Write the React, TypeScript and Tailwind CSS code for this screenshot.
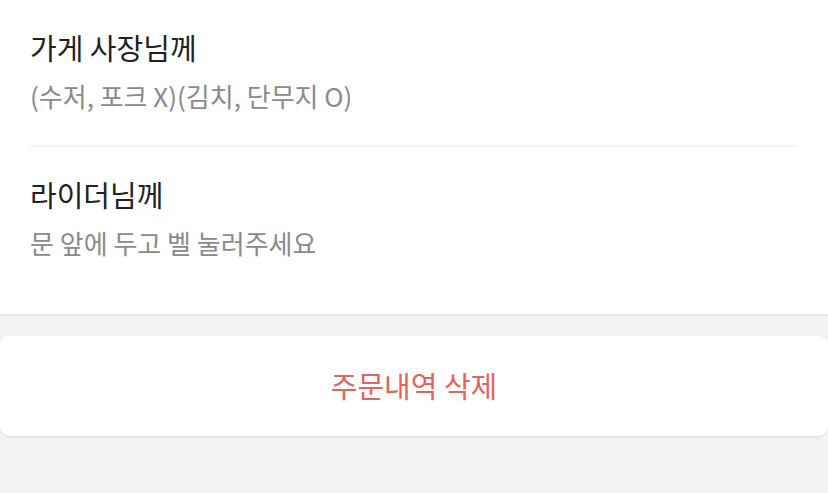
import React from 'react';

const font = { fontFamily: '"Noto Sans CJK KR", "Noto Sans", sans-serif' };

interface RequestItem {
  title: string;
  message: string;
}

const requests: RequestItem[] = [
  { title: '가게 사장님께', message: '(수저, 포크 X)(김치, 단무지 O)' },
  { title: '라이더님께', message: '문 앞에 두고 벨 눌러주세요' },
];

const App: React.FC = () => {
  return (
    <div className="min-h-screen w-[828px] h-[493px] bg-[#f2f3f5] overflow-hidden" style={font}>
      <div className="bg-white px-[30px] border-b-2 border-[#e6e7e9]">
        {requests.map((item, i) => (
          <div
            key={item.title}
            className={i === 0 ? 'pt-[27px] pb-[31px] border-b-2 border-[#f3f3f3]' : 'pt-[27px] pb-[53px]'}
          >
            <h3 className="text-[29px] leading-[40px] text-[#222222]">{item.title}</h3>
            <p className="mt-[11px] text-[26px] leading-[36px] text-[#8a8a8a]">{item.message}</p>
          </div>
        ))}
      </div>

      <div className="mt-[20px]">
        <button
          type="button"
          className="w-full h-[100px] bg-white rounded-[10px] shadow-[0_2px_0_#e5e6e8] text-[29px] text-[#e6625c]"
        >
          주문내역 삭제
        </button>
      </div>
    </div>
  );
};

export default App;
